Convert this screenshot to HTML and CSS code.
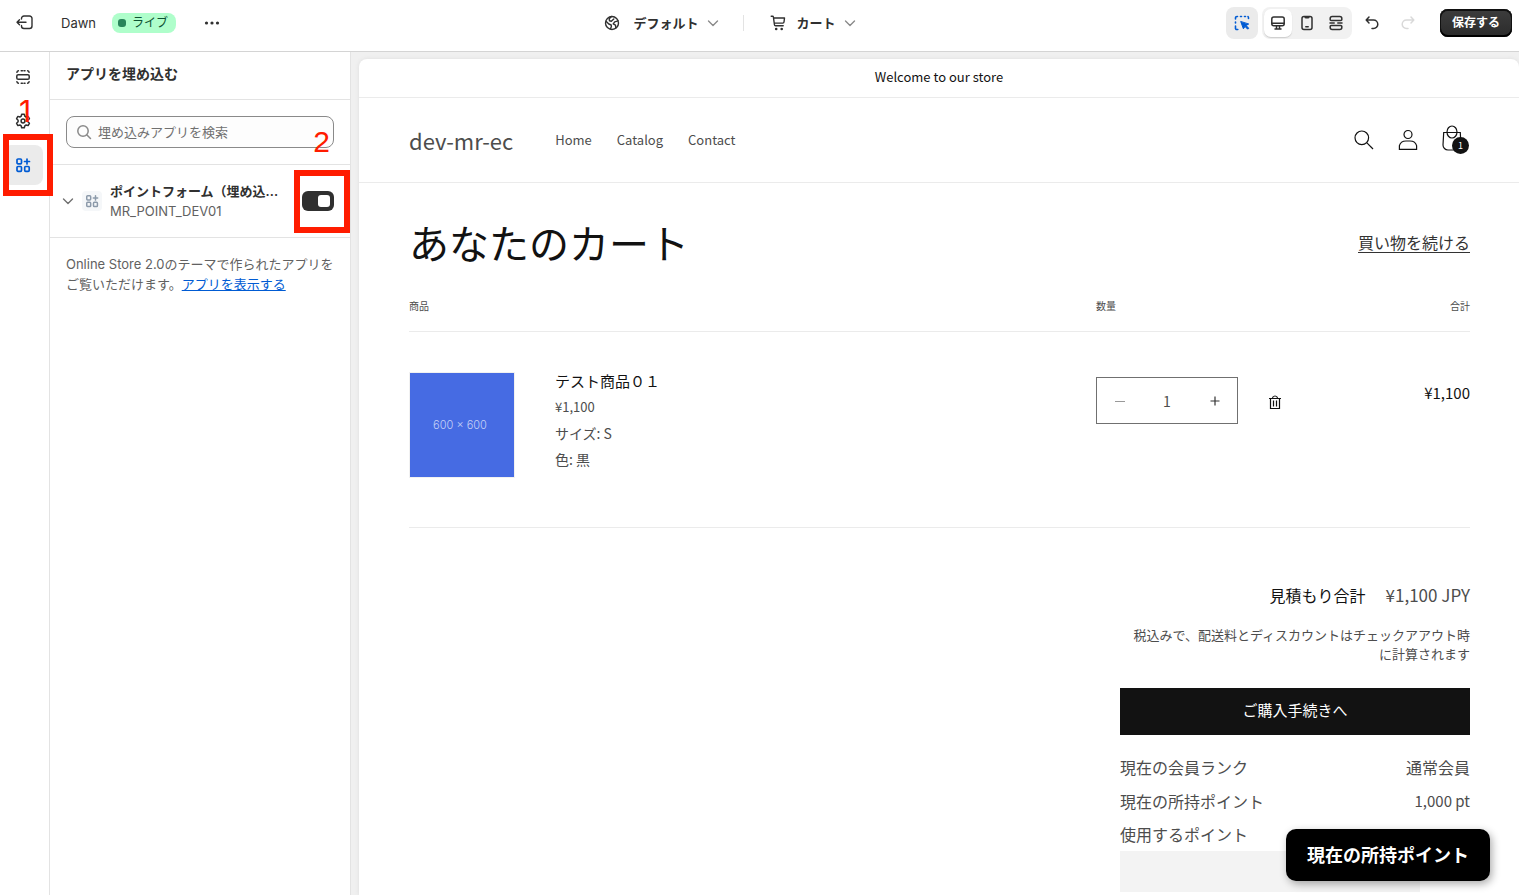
FILE: index.html
```html
<!DOCTYPE html>
<html lang="ja">
<head>
<meta charset="utf-8">
<meta name="viewport" content="width=device-width, initial-scale=1">
<title>Dawn - テーマエディタ</title>
<link rel="stylesheet" href="styles.css">
</head>
<body>
<svg class="defs" aria-hidden="true">
  <symbol id="apps" viewBox="0 0 16 16"><g fill="none" stroke="currentColor" stroke-width="1.7" stroke-linecap="round"><rect x="2" y="2" width="4.5" height="4.8" rx="1"/><rect x="2" y="9.5" width="4.5" height="4.8" rx="1"/><rect x="9.7" y="9.5" width="4.5" height="4.8" rx="1"/><path d="M12 2v5M9.5 4.5h5"/></g></symbol>
  <symbol id="chevron" viewBox="0 0 12 12"><path d="M1.5 4 6 8.5 10.500 4" fill="none" stroke="currentColor" stroke-width="1.4" stroke-linecap="round" stroke-linejoin="round"/></symbol>
</svg>
<header class="topbar">
  <div class="topbar-left">
    <button class="icon-btn" aria-label="終了"><svg width="18" height="16" viewBox="0 0 18 16" fill="none" stroke="currentColor" stroke-width="1.4" stroke-linecap="round" stroke-linejoin="round"><path d="M5.500 4V3.500a2.500 2.500 0 0 1 2.500-2.500h5.500a2.500 2.500 0 0 1 2.500 2.500v7.500a2.500 2.500 0 0 1-2.500 2.500H8a2.500 2.500 0 0 1-2.500-2.500v-.5M10 7.300H1M3.500 4.800 1 7.300l2.500 2.500"/></svg></button>
    <span class="theme-name">Dawn</span>
    <span class="badge"><span class="dot"></span>ライブ</span>
    <button class="icon-btn" aria-label="その他"><svg width="16" height="16" viewBox="0 0 16 16" fill="currentColor"><circle cx="2.500" cy="8" r="1.600"/><circle cx="8" cy="8" r="1.600"/><circle cx="13.500" cy="8" r="1.600"/></svg></button>
  </div>
  <div class="topbar-center">
    <button class="picker"><svg width="16" height="16" viewBox="0 0 16 16" fill="none" stroke="currentColor" stroke-width="1.400" stroke-linejoin="round" stroke-linecap="round"><circle cx="8" cy="8" r="6.500"/><path d="M2 6.200 4.800 9l2.400 1 .2 1.500-1 2.500M7.500 1.600 5.200 3.800l.3 2 1.800.4L9.800 4M14 5.800l-3.300 1-1.500 2 2.300 1.400.3 2.800"/></svg><span>デフォルト</span><svg class="chev" width="12" height="12"><use href="#chevron"/></svg></button>
    <span class="divider"></span>
    <button class="picker"><svg width="16" height="16" viewBox="0 0 16 16" fill="none" stroke="currentColor" stroke-width="1.400" stroke-linecap="round" stroke-linejoin="round"><path d="M1.200 1.200h1.300q.8 0 .9.800l1 7.500q.1 1.200 1.200 1.200h7.600M3.800 3h10.700l-.5 4q-.1 1-1.200 1.100H4.600"/><circle cx="6.200" cy="14" r=".6" fill="currentColor"/><circle cx="11.700" cy="14" r=".6" fill="currentColor"/></svg><span>カート</span><svg class="chev" width="12" height="12"><use href="#chevron"/></svg></button>
  </div>
  <div class="topbar-right">
    <button class="inspect" aria-label="インスペクター"><svg width="16" height="16" viewBox="0 0 16 16" fill="none" stroke="currentColor" stroke-width="1.600" stroke-linecap="round"><path d="M1.500 4V3A1.500 1.500 0 0 1 3 1.500h.5M6.500 1.500h1M10.500 1.500h1M14 1.500q.5.500.5 1.500v.5M1.500 7v1M1.500 11v1.500A1.500 1.500 0 0 0 3 14.500h.8"/><path d="m6.800 6.800 2.600 7 1.600-2.300 2.700 2.700 1-1-2.600-2.700 2.300-1.300z" fill="currentColor" stroke-width="1" stroke-linejoin="round"/></svg></button>
    <div class="devices">
      <button class="device active" aria-label="デスクトップ"><svg width="16" height="16" viewBox="0 0 16 16" fill="none" stroke="currentColor" stroke-width="1.500" stroke-linecap="round"><rect x="1.800" y="2" width="12.400" height="8.800" rx="2"/><path d="M2 8.300h12M6.500 11v2.500M9.500 11v2.500M5 14h6"/></svg></button>
      <button class="device" aria-label="モバイル"><svg width="16" height="16" viewBox="0 0 16 16" fill="none" stroke="currentColor" stroke-width="1.500" stroke-linecap="round"><rect x="3" y="1.500" width="10" height="13" rx="2"/><path d="M6.800 11.800h2.400M6 1.800q.2 1 1 1h2q.8 0 1-1"/></svg></button>
      <button class="device" aria-label="全画面"><svg width="16" height="16" viewBox="0 0 16 16" fill="none" stroke="currentColor" stroke-width="1.500" stroke-linecap="round" stroke-linejoin="round"><path d="M2.200 4.800V3.500q0-2 2-2h7.600q2 0 2 2v1.300q-.4.700-1.300.7h-9q-.9 0-1.300-.7zM2.200 11.200v1.300q0 2 2 2h7.600q2 0 2-2v-1.300q-.4-.7-1.300-.7h-9q-.9 0-1.300.7zM2 8h4.200M9.800 8H14"/></svg></button>
    </div>
    <button class="icon-btn undo" aria-label="元に戻す"><svg width="16" height="16" viewBox="0 0 16 16" fill="none" stroke="currentColor" stroke-width="1.500" stroke-linecap="round" stroke-linejoin="round"><path d="M5 2 2.200 5 5 8M2.500 5h7a4.300 4.300 0 0 1 0 8.600H8"/></svg></button>
    <button class="icon-btn redo" aria-label="やり直す" disabled><svg width="16" height="16" viewBox="0 0 16 16" fill="none" stroke="currentColor" stroke-width="1.500" stroke-linecap="round" stroke-linejoin="round"><path d="m11 2 2.800 3L11 8M13.500 5h-7a4.300 4.300 0 0 0 0 8.600H8"/></svg></button>
    <button class="save">保存する</button>
  </div>
</header>
<div class="workspace">
  <nav class="rail" aria-label="エディタ">
    <button class="rail-btn" aria-label="セクション"><svg width="16" height="16" viewBox="0 0 16 16" fill="none" stroke="currentColor" stroke-width="1.500" stroke-linecap="round"><rect x="1.800" y="5.700" width="12.400" height="4.600" rx="1.400"/><path d="M1.900 3.300q.2-1.300 1.500-1.500M6.200 1.700h1.200M9 1.700h1M12.600 1.800q1.300.2 1.500 1.500M1.900 12.700q.2 1.300 1.500 1.500M6.200 14.300h1.200M9 14.300h1M12.600 14.200q1.300-.2 1.500-1.500"/></svg></button>
    <button class="rail-btn" aria-label="テーマ設定"><svg width="16" height="16" viewBox="0 0 16 16" fill="none" stroke="currentColor" stroke-width="1.500" stroke-linejoin="round"><path d="M6.700 1.200h2.600l.5 2 1.300.8 2-.6 1.300 2.300L12.900 7.200v1.600l1.500 1.500-1.300 2.300-2-.6-1.300.8-.5 2H6.700l-.5-2-1.300-.8-2 .6-1.300-2.300 1.500-1.500V7.200L1.600 5.700l1.300-2.300 2 .6 1.300-.8z"/><circle cx="8" cy="8" r="1.900"/></svg><span class="mark mark-one">1</span></button>
    <button class="rail-btn current" aria-label="アプリを埋め込む"><svg width="16" height="16"><use href="#apps"/></svg><span class="frame frame-nav"></span></button>
  </nav>
  <aside class="panel">
    <h2 class="panel-title">アプリを埋め込む</h2>
    <div class="search-wrap">
      <label class="search"><svg width="16" height="16" viewBox="0 0 16 16" fill="none" stroke="currentColor" stroke-width="1.500" stroke-linecap="round"><circle cx="7" cy="7" r="5.200"/><path d="m11 11 3.500 3.500"/></svg><input type="search" placeholder="埋め込みアプリを検索" aria-label="埋め込みアプリを検索"></label>
      <span class="mark mark-two">2</span>
    </div>
    <div class="app-row">
      <button class="expand" aria-label="展開"><svg width="12" height="12"><use href="#chevron"/></svg></button>
      <span class="app-icon"><svg width="14" height="14"><use href="#apps"/></svg></span>
      <div class="app-text"><label class="app-name" for="embed">ポイントフォーム（埋め込...</label><span class="app-sub">MR_POINT_DEV01</span></div>
      <span class="switch-wrap"><input class="switch" type="checkbox" role="switch" id="embed" checked><span class="frame frame-switch"></span></span>
    </div>
    <p class="panel-note">Online Store 2.0のテーマで作られたアプリをご覧いただけます。<a href="#apps">アプリを表示する</a></p>
  </aside>
  <main class="preview">
    <div class="store">
      <p class="announce">Welcome to our store</p>
      <header class="store-header">
        <a class="shop" href="#home">dev-mr-ec</a>
        <nav class="menu"><a href="#home">Home</a><a href="#catalog">Catalog</a><a href="#contact">Contact</a></nav>
        <div class="store-icons">
          <button aria-label="検索"><svg width="20" height="20" viewBox="0 0 20 20" fill="none" stroke="currentColor" stroke-width="1.200"><circle cx="7.800" cy="7.800" r="6.800"/><path d="m12.700 12.700 6.300 6.300"/></svg></button>
          <button aria-label="アカウント"><svg width="20" height="22" viewBox="0 0 20 22" fill="none" stroke="currentColor" stroke-width="1.200"><circle cx="10" cy="5.500" r="4"/><path d="M1.400 20.300v-3.600q1.200-4.700 6.600-4.700h4q5.400 0 6.600 4.700v3.600z"/></svg></button>
          <button class="bag" aria-label="カート"><svg width="20" height="26" viewBox="0 0 20 26" fill="none" stroke="currentColor" stroke-width="1.200"><path d="M1.700 7.500h16.600l.6 12.500a5 5 0 0 1-5 5H6a5 5 0 0 1-5-5z"/><ellipse cx="10" cy="7" rx="5" ry="6"/></svg><span class="count">1</span></button>
        </div>
      </header>
      <section class="cart">
        <div class="cart-head"><h1>あなたのカート</h1><a href="#catalog">買い物を続ける</a></div>
        <table class="items">
          <thead><tr><th class="col-product" colspan="2">商品</th><th class="col-qty">数量</th><th class="col-total">合計</th></tr></thead>
          <tbody><tr>
            <td class="cell-media"><svg class="thumb" width="106" height="106" viewBox="0 0 106 106" role="img" aria-label="商品画像"><rect width="106" height="106" fill="#f1f1f1"/><rect x="1" y="1" width="104" height="104" fill="#466be3"/><text x="51" y="57" text-anchor="middle" class="thumb-text">600 × 600</text></svg></td>
            <td class="cell-info"><a class="item-name" href="#item">テスト商品０１</a><p class="item-price">¥1,100</p><p>サイズ: S</p><p>色: 黒</p></td>
            <td class="cell-qty"><div class="qty-row"><div class="qty"><button class="less" aria-label="減らす"><svg width="10" height="10" viewBox="0 0 10 10" stroke="currentColor"><path d="M0 5.500h10"/></svg></button><input value="1" aria-label="数量"><button aria-label="増やす"><svg width="10" height="10" viewBox="0 0 10 10" stroke="currentColor" stroke-width="1.200"><path d="M.5 5h9M5 .5v9"/></svg></button></div><button class="trash" aria-label="削除"><svg width="14" height="14" viewBox="0 0 14 14" fill="none" stroke="currentColor"><path d="M1 3.500h12M2.500 3.500v10h9v-10M4.500 3q.3-2 2.500-2t2.500 2M5.500 5.500v6M8.500 5.500v6" stroke-width="1.200"/></svg></button></div></td>
            <td class="cell-total">¥1,100</td>
          </tr></tbody>
        </table>
        <div class="summary">
          <div class="subtotal"><h2>見積もり合計</h2><span>¥1,100 JPY</span></div>
          <p class="tax">税込みで、配送料とディスカウントはチェックアアウト時に計算されます</p>
          <button class="checkout">ご購入手続きへ</button>
          <dl class="points"><div><dt>現在の会員ランク</dt><dd>通常会員</dd></div><div><dt>現在の所持ポイント</dt><dd class="pt">1,000 pt</dd></div></dl>
          <label class="use-label" for="use">使用するポイント</label>
          <input class="use-input" id="use">
        </div>
      </section>
    </div>
    <button class="float">現在の所持ポイント</button>
  </main>
</div>
</body>
</html>
```
FILE: styles.css
```css
* { box-sizing: border-box; }
body, h1, h2, p, dl, dd { margin: 0; }
button, input { font: inherit; color: inherit; border: 0; padding: 0; background: none; }
button { display: flex; align-items: center; justify-content: center; }
svg { flex: none; display: block; }
.defs { position: absolute; width: 0; height: 0; }
body {
  display: flex;
  flex-direction: column;
  height: 100vh;
  overflow: hidden;
  background: #fff;
  color: #303030;
  font: 13px/20px Inter, "Noto Sans CJK JP", sans-serif;
}

/* top bar */
.topbar {
  display: flex;
  align-items: center;
  justify-content: space-between;
  height: 52px;
  flex: none;
  padding: 0 7px 6px 16px;
  border-bottom: 1px solid #d4d4d4;
}
.topbar-left, .topbar-center, .topbar-right { display: flex; align-items: center; }
.topbar-left { padding-right: 14px; }
.theme-name { margin-left: 27px; }
.badge {
  display: flex;
  align-items: center;
  gap: 6px;
  height: 20px;
  margin: 0 28px 0 16px;
  padding: 0 8px 0 6px;
  border-radius: 8px;
  background: #affecb;
  color: #0c5132;
  font-size: 12px;
}
.dot { width: 8px; height: 8px; border-radius: 3px; background: #29845a; }
.picker { font-weight: 600; }
.picker span { margin: 0 8px 0 13px; }
.picker:last-child span { margin-left: 11px; }
.chev { color: #8a8a8a; }
.divider { width: 1px; height: 16px; margin: 0 26px 0 24px; background: #e3e3e3; }
.inspect { width: 32px; height: 32px; border-radius: 8px; background: #ebebeb; color: #005bd3; }
.devices { display: flex; gap: 1px; margin-left: 4px; padding: 2px; border-radius: 8px; background: #f1f1f1; }
.device { width: 28px; height: 28px; border-radius: 7px; }
.device.active { background: #fff; box-shadow: 0 1px 1px #ccc; }
.undo { margin-left: 12px; }
.redo { margin-left: 20px; color: #d9d9d9; }
.save {
  height: 28px;
  margin-left: 24px;
  padding: 0 12px;
  border-radius: 8px;
  background: linear-gradient(#3d3d3d, #2b2b2b);
  box-shadow: inset 0 1px 0 1px #111, inset 0 2px 0 #666, inset 0 -1px 0 1px #000;
  color: #fff;
  font-size: 12px;
  font-weight: 600;
}

/* side rail and embed panel */
.workspace { display: flex; flex: 1; min-height: 0; }
.rail {
  display: flex;
  flex-direction: column;
  gap: 4px;
  width: 50px;
  flex: none;
  padding: 5px 6px 0 3px;
  border-right: 1px solid #e3e3e3;
}
.rail-btn { position: relative; height: 40px; border-radius: 8px; }
.rail-btn.current { background: #ebebeb; color: #005bd3; }
.mark { position: absolute; z-index: 2; color: #ff1c00; font: 30px/30px "Liberation Sans", sans-serif; }
.mark-one { left: 16px; top: -5px; font-family: Inter, sans-serif; }
.mark-two { right: 20px; top: 27px; }
.frame { position: absolute; z-index: 2; border: 6px solid #ff1c00; pointer-events: none; }
.frame-nav { inset: -11px -10px -11px 0; }
.frame-switch { inset: -21px -16px -22px -8px; }
.panel { width: 301px; flex: none; border-right: 1px solid #e3e3e3; }
.panel-title { padding: 12px 16px 15px; border-bottom: 1px solid #e3e3e3; font-size: 14px; line-height: 20px; font-weight: 600; }
.search-wrap { position: relative; padding: 16px; border-bottom: 1px solid #e3e3e3; }
.search {
  display: flex;
  align-items: center;
  gap: 6px;
  height: 32px;
  padding: 0 9px;
  border: 1px solid #8a8a8a;
  border-radius: 8px;
  background: #fdfdfd;
  color: #8a8a8a;
}
.search input { flex: 1; min-width: 0; outline: 0; color: #303030; }
.search input::placeholder { color: #707070; }
.app-row { display: flex; align-items: center; height: 73px; padding: 0 16px 0 12px; border-bottom: 1px solid #e3e3e3; }
.expand { color: #707070; }
.app-icon { display: grid; place-items: center; width: 20px; height: 20px; margin: 0 8px; border-radius: 4px; background: #f5f7f9; color: #8c9aaa; }
.app-name, .app-sub { display: block; white-space: nowrap; }
.app-name { font-weight: 600; }
.app-sub { color: #616161; }
.switch-wrap { position: relative; margin-left: auto; }
.switch {
  display: flex;
  justify-content: flex-end;
  width: 32px;
  height: 20px;
  margin: 0;
  padding: 4px;
  border-radius: 6px;
  background: #303030;
  appearance: none;
}
.switch::before { content: ""; width: 12px; border-radius: 3px; background: #fff; }
.panel-note { padding: 16px; color: #616161; }
.panel-note a { color: #005bd3; }

/* storefront preview */
.preview { position: relative; flex: 1; min-width: 0; padding: 7px 0 0 8px; overflow: hidden; background: #f0f0f0; }
.store {
  min-height: 100%;
  border-radius: 8px 8px 0 0;
  background: #fff;
  box-shadow: 0 0 4px #ddd;
  color: #4d4d4d;
  font: 15px/24px "Noto Sans CJK JP", sans-serif;
}
.store a { color: inherit; text-decoration: none; }
.announce { padding: 6px 7px 8px; border-bottom: 1px solid #ebebeb; color: #121212; font-size: 13px; text-align: center; }
.store-header { display: flex; align-items: center; height: 85px; padding: 0 49px 0 50px; border-bottom: 1px solid #ebebeb; }
.shop { font-size: 22px; line-height: 36px; }
.menu { display: flex; gap: 25px; margin-left: 42px; font-size: 13px; }
.store-icons { display: flex; align-items: center; gap: 24px; margin-left: auto; padding-right: 8px; color: #121212; }
.bag { position: relative; margin-top: -4px; }
.count { position: absolute; left: 10px; top: 12px; width: 17px; height: 17px; border-radius: 50%; background: #121212; color: #fff; font-size: 9px; line-height: 17px; text-align: center; }
.cart { padding: 33px 49px 0 50px; }
.cart-head { display: flex; align-items: center; justify-content: space-between; }
.cart-head h1 { color: #121212; font-size: 40px; line-height: 52px; font-weight: 400; }
.cart-head a { border-bottom: 1px solid #333; color: #333; font-size: 16px; line-height: 20px; }
.items { width: 100%; border-collapse: collapse; }
.items th { padding: 29px 0 16px; border-bottom: 1px solid #ebebeb; font-size: 10px; line-height: 18px; font-weight: 400; text-align: left; }
.items td { padding: 0 0 49px; border-bottom: 1px solid #ebebeb; vertical-align: top; }
.items .col-qty { width: 237px; }
.items .col-total, .items .cell-total { width: 137px; text-align: right; }
.items .cell-media { width: 146px; padding-top: 40px; }
.thumb-text { fill: #c5d0f6; font: 300 11px Inter, sans-serif; }
.items .cell-info { padding-top: 36px; font-size: 14px; line-height: 26px; }
.store .item-name { color: #121212; font-size: 15px; }
.cell-info .item-price { font-size: 13px; }
.items .cell-qty { padding-top: 45px; }
.qty-row { display: flex; align-items: center; gap: 30px; }
.qty { display: flex; width: 142px; height: 47px; border: 1px solid #707070; }
.qty button { width: 45px; color: #333; }
.qty .less { color: #999; }
.qty input { flex: 1; min-width: 0; text-align: center; font-size: 14px; }
.trash { color: #121212; margin-top: 3px; }
.items .cell-total { padding-top: 49px; color: #121212; }
.summary { width: 350px; margin: 55px 0 0 auto; }
.subtotal { display: flex; justify-content: flex-end; gap: 20px; font-size: 17px; }
.subtotal h2 { color: #121212; font-size: 16px; font-weight: 400; }
.tax { margin: 18px 0 25px; padding-left: 6px; font-size: 13px; line-height: 19px; text-align: right; }
.checkout { width: 100%; height: 47px; padding-bottom: 4px; background: #121212; color: #fff; }
.points { padding-top: 15px; font-size: 16px; line-height: 34px; }
.points div { display: flex; justify-content: space-between; }
.points .pt { font-size: 15px; }
.use-label { display: block; font-size: 16px; line-height: 33px; }
.use-input { display: block; width: 300px; height: 41px; background: #f3f3f3; }
.float {
  position: absolute;
  right: 29px;
  bottom: 14px;
  height: 52px;
  padding: 0 21px 3px;
  border-radius: 10px;
  background: #000;
  box-shadow: 2px 3px 8px #0005;
  color: #fff;
  font: 700 18px/24px "Noto Sans CJK JP", sans-serif;
}
```
